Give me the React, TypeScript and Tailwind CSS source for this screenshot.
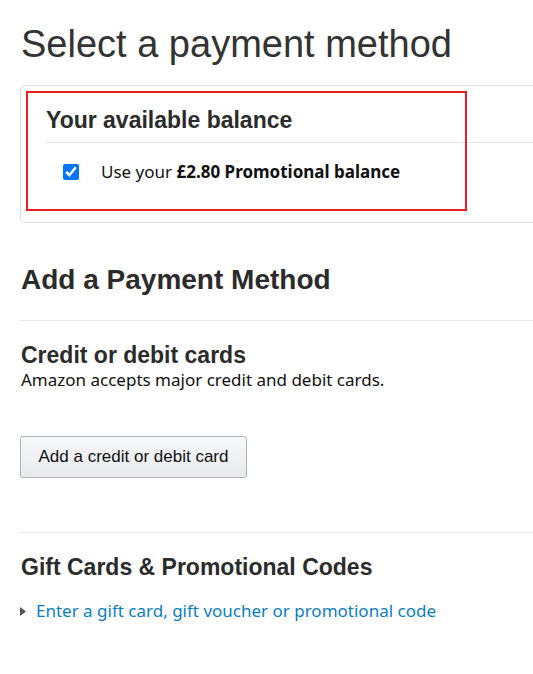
import { useState } from "react";

const HEAD = "font-['Liberation_Sans',Arial,sans-serif]";
const BODY = "font-['Noto_Sans',Arial,sans-serif]";

export default function App() {
  const [useBalance, setUseBalance] = useState(true);

  return (
    <div className="h-[674px] w-full overflow-hidden bg-white text-[#111]">
      <div className="w-[600px] pl-5 pt-[22px]">
        <h1 className={`${HEAD} ml-[1px] text-[38px] leading-[44px] text-[#333]`}>
          Select a payment method
        </h1>

        {/* Balance */}
        <div className="relative mt-[19px] h-[138px] rounded-[5px] border border-[#ddd]">
          <div className="pl-[25px] pt-[20px]">
            <h2 className={`${HEAD} text-[23px] font-bold leading-[28px] text-[#2b2b2b]`}>
              Your available balance
            </h2>
            <div className="mt-[8px] border-t border-[#e7e7e7]" />
            <label className={`${BODY} mt-[18px] flex items-center text-[17px] leading-[22px] text-[#111]`}>
              <input
                type="checkbox"
                checked={useBalance}
                onChange={(e) => setUseBalance(e.target.checked)}
                className="ml-[17px] h-4 w-4 accent-[#0075ff]"
              />
              <span className="ml-[22px]">
                Use your <b className="font-bold">£2.80 Promotional balance</b>
              </span>
            </label>
          </div>
          <div className="pointer-events-none absolute left-[5px] top-[5px] h-[120px] w-[441px] border-2 border-[#ec1c24]" />
        </div>

        {/* Add a payment method */}
        <h2 className={`${HEAD} mt-[40px] ml-[1px] text-[28px] font-bold leading-[34px] text-[#2b2b2b]`}>
          Add a Payment Method
        </h2>
        <div className="mt-[23px] border-t border-[#e7e7e7]" />

        <h3 className={`${HEAD} mt-[21px] ml-[1px] text-[23px] font-bold leading-[26px] text-[#2b2b2b]`}>
          Credit or debit cards
        </h3>
        <p className={`${BODY} ml-[1px] text-[17px] leading-[24px] text-[#111]`}>
          Amazon accepts major credit and debit cards.
        </p>

        <button
          type="button"
          className={`${HEAD} mt-[44px] h-[42px] w-[227px] rounded-[3px] border border-[#adb1b8] bg-gradient-to-b from-[#f7f8fa] to-[#e7e9ec] text-[17px] text-[#111]`}
        >
          Add a credit or debit card
        </button>

        <div className="mt-[54px] border-t border-[#e7e7e7]" />

        <h3 className={`${HEAD} mt-[21px] ml-[1px] text-[23px] font-bold leading-[26px] text-[#2b2b2b]`}>
          Gift Cards &amp; Promotional Codes
        </h3>

        <div className="mt-[19px] flex items-center">
          <svg width="6" height="9" viewBox="0 0 6 9" className="mt-[1px]">
            <path d="M0 0 L6 4.5 L0 9 Z" fill="#555" />
          </svg>
          <a href="#" className={`${BODY} ml-[10px] text-[17px] leading-[24px] text-[#0a7ebf]`}>
            Enter a gift card, gift voucher or promotional code
          </a>
        </div>
      </div>
    </div>
  );
}
